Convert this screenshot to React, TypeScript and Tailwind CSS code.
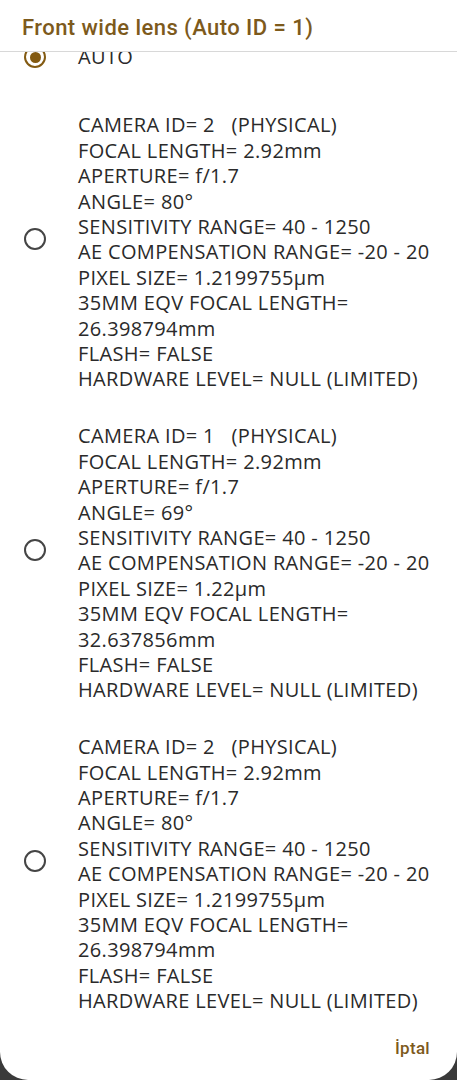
const cameras = [
  [
    'CAMERA ID= 2   (PHYSICAL)',
    'FOCAL LENGTH= 2.92mm',
    'APERTURE= f/1.7',
    'ANGLE= 80°',
    'SENSITIVITY RANGE= 40 - 1250',
    'AE COMPENSATION RANGE= -20 - 20',
    'PIXEL SIZE= 1.2199755µm',
    '35MM EQV FOCAL LENGTH=',
    '26.398794mm',
    'FLASH= FALSE',
    'HARDWARE LEVEL= NULL (LIMITED)',
  ],
  [
    'CAMERA ID= 1   (PHYSICAL)',
    'FOCAL LENGTH= 2.92mm',
    'APERTURE= f/1.7',
    'ANGLE= 69°',
    'SENSITIVITY RANGE= 40 - 1250',
    'AE COMPENSATION RANGE= -20 - 20',
    'PIXEL SIZE= 1.22µm',
    '35MM EQV FOCAL LENGTH=',
    '32.637856mm',
    'FLASH= FALSE',
    'HARDWARE LEVEL= NULL (LIMITED)',
  ],
  [
    'CAMERA ID= 2   (PHYSICAL)',
    'FOCAL LENGTH= 2.92mm',
    'APERTURE= f/1.7',
    'ANGLE= 80°',
    'SENSITIVITY RANGE= 40 - 1250',
    'AE COMPENSATION RANGE= -20 - 20',
    'PIXEL SIZE= 1.2199755µm',
    '35MM EQV FOCAL LENGTH=',
    '26.398794mm',
    'FLASH= FALSE',
    'HARDWARE LEVEL= NULL (LIMITED)',
  ],
]

function Radio({ checked }: { checked?: boolean }) {
  return (
    <div
      className={`flex h-[22px] w-[22px] shrink-0 items-center justify-center rounded-full border-[2.5px] ${
        checked ? 'border-[#835a12]' : 'border-[#454545]'
      }`}
    >
      {checked && <div className="h-[11px] w-[11px] rounded-full bg-[#835a12]" />}
    </div>
  )
}

export default function App() {
  return (
    <div className="h-[1080px] w-[457px] overflow-hidden bg-[#3a3a3a]" style={{ fontFamily: '"Open Sans", Roboto, sans-serif' }}>
      <div className="flex h-[1080px] flex-col rounded-b-[28px] bg-white">
        <div className="h-[52px] shrink-0 border-b border-[#d8d8d8] pl-[22px] pt-[13px]">
          <h2 className="font-[Roboto,sans-serif] text-[22px] font-medium leading-[30px] tracking-[0.45px] text-[#7d5a1c]">
            Front wide lens (Auto ID = 1)
          </h2>
        </div>

        <div className="flex-1 overflow-hidden">
          <div className="-mt-[7px]">
            <div className="flex h-[24px] items-center">
              <div className="w-[78px] pl-[24px]">
                <Radio checked />
              </div>
              <span className="text-[20px] tracking-[0.35px] text-[#2a2a2a]">AUTO</span>
            </div>

            <div className="mt-[18px] flex flex-col gap-[6px]">
              {cameras.map((lines, i) => (
                <div key={i} className="flex items-center">
                  <div className="w-[78px] pl-[24px]">
                    <Radio />
                  </div>
                  <div className="text-[20px] leading-[25.4px] tracking-[0.35px] text-[#2a2a2a]">
                    <div>&nbsp;</div>
                    {lines.map((l, j) => (
                      <div key={j} className="whitespace-pre">{l}</div>
                    ))}
                  </div>
                </div>
              ))}
            </div>
          </div>
        </div>

        <div className="flex h-[62px] shrink-0 justify-end pr-[27px] pt-[18px]">
          <span className="font-[Roboto,sans-serif] text-[17px] font-medium tracking-[0.3px] text-[#7d5a1c]">İptal</span>
        </div>
      </div>
    </div>
  )
}
